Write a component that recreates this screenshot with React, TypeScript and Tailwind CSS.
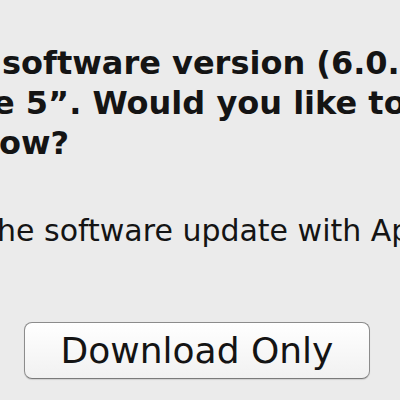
export default function App() {
  return (
    <div className="w-[400px] h-[400px] overflow-hidden bg-[#ebebeb] text-[#141414] font-['DejaVu_Sans',sans-serif]">
      <div className="pt-[43px] flex flex-col">
        {/* message, bold */}
        <div className="font-bold text-[32px] leading-[40px] whitespace-nowrap">
          <div className="ml-[2px]">software version (6.0.1) is available</div>
          <div className="ml-[-7px]">e 5”. Would you like to download it</div>
          <div className="ml-[-1px]">ow?</div>
        </div>

        {/* informative text */}
        <div className="mt-[48px] text-[30px] leading-[40px] whitespace-nowrap ml-[-3px]">
          he software update with Apple Software Update
        </div>

        <div className="mt-[71px] pl-[24px]">
          <button className="w-[346px] h-[57px] rounded-[8px] border-[1.5px] border-[#8c8c8c] border-b-[#7a7a7a] bg-gradient-to-b from-white to-[#f1f1f1] shadow-[0_1px_1px_rgba(0,0,0,0.12)] text-[36px] leading-none text-[#141414] flex items-center justify-center">
            Download Only
          </button>
        </div>
      </div>
    </div>
  );
}
